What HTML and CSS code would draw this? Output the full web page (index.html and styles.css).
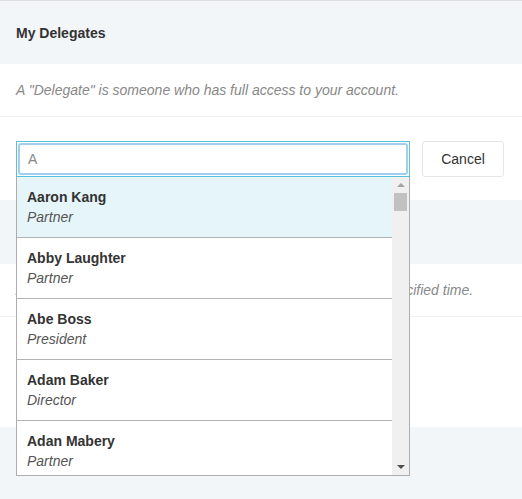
FILE: index.html
```html
<!DOCTYPE html>
<html lang="en">
<head>
<meta charset="UTF-8">
<title>My Delegates</title>
<link rel="stylesheet" href="styles.css">
</head>
<body>

<div class="panel-header">My Delegates</div>
<div class="panel-body">
  <p class="note">A "Delegate" is someone who has full access to your account.</p>
</div>

<div class="search-row">
  <div class="combo">
    <input class="combo-input" type="text" value="A">
    <div class="combo-menu">
      <ul class="combo-list">
        <li class="combo-item active">
          <div class="item-name">Aaron Kang</div>
          <div class="item-title">Partner</div>
        </li>
        <li class="combo-item">
          <div class="item-name">Abby Laughter</div>
          <div class="item-title">Partner</div>
        </li>
        <li class="combo-item">
          <div class="item-name">Abe Boss</div>
          <div class="item-title">President</div>
        </li>
        <li class="combo-item">
          <div class="item-name">Adam Baker</div>
          <div class="item-title">Director</div>
        </li>
        <li class="combo-item">
          <div class="item-name">Adan Mabery</div>
          <div class="item-title">Partner</div>
        </li>
      </ul>
      <div class="scrollbar">
        <span class="arrow-up"></span>
        <span class="thumb"></span>
        <span class="track"></span>
        <span class="arrow-down"></span>
      </div>
    </div>
  </div>
  <button class="btn">Cancel</button>
</div>

<div class="panel-header tall"></div>
<div class="panel-body">
  <p class="note">A "Temporary Delegate" has access to your account until a specified time.</p>
</div>
<div class="panel-empty"></div>
<div class="panel-footer"></div>

</body>
</html>
```

FILE: styles.css
```css
body {
  margin: 0;
  font-family: "Liberation Sans", Arial, sans-serif;
  font-size: 14px;
  color: #333;
  background: #fff;
  border-top: 1px solid #dedede;
  overflow: hidden;
}
.panel-header {
  height: 63px;
  padding: 0 16px;
  display: flex;
  align-items: center;
  background: #f3f6f9;
  font-size: 14px;
  font-weight: bold;
  color: #333;
}
.panel-header.tall {
  height: 64px;
}
.panel-body {
  height: 52px;
  padding: 0 16px;
  display: flex;
  align-items: center;
  border-bottom: 1px solid #eef1f4;
}
.note {
  margin: 0;
  font-style: italic;
  color: #888;
}
.search-row {
  display: flex;
  align-items: flex-start;
  gap: 12px;
  padding: 24px 16px 23px;
}
.combo {
  position: relative;
  width: 390px;
  height: 32px;
  padding: 1px;
  border: 1px solid #5bc0de;
  z-index: 10;
}
.combo-input {
  box-sizing: border-box;
  display: block;
  width: 100%;
  height: 32px;
  margin: 0;
  padding: 0 8px;
  border: 2px solid #a4cef0;
  border-radius: 3px;
  outline: none;
  font-family: inherit;
  font-size: 14px;
  color: #888;
}
.combo-menu {
  position: absolute;
  top: 100%;
  left: -1px;
  right: -1px;
  height: 298px;
  margin-top: 1px;
  display: flex;
  background: #fff;
  border: 1px solid #adadad;
  border-top: 0;
  overflow: hidden;
}
.combo-list {
  flex: 1;
  list-style: none;
  margin: 0;
  padding: 0;
}
.combo-item {
  height: 40px;
  padding: 10px 10px;
  border-bottom: 1px solid #b3b3b3;
  line-height: 20px;
}
.combo-item.active {
  background: #e6f5fa;
}
.item-name {
  font-weight: bold;
  color: #333;
}
.item-title {
  font-style: italic;
  color: #555;
}
.scrollbar {
  width: 17px;
  display: flex;
  flex-direction: column;
  align-items: center;
  background: #f0f0f0;
}
.arrow-up,
.arrow-down {
  width: 0;
  height: 0;
  border-left: 4px solid transparent;
  border-right: 4px solid transparent;
}
.arrow-up {
  margin-top: 6px;
  border-bottom: 4px solid #a3a3a3;
}
.arrow-down {
  margin-bottom: 6px;
  border-top: 4px solid #505050;
}
.thumb {
  width: 13px;
  height: 18px;
  margin-top: 6px;
  background: #c1c1c1;
}
.track {
  flex: 1;
}
.btn {
  height: 36px;
  width: 82px;
  background: #fff;
  border: 1px solid #e6e6e6;
  border-radius: 3px;
  font-family: inherit;
  font-size: 14px;
  color: #333;
}
.panel-empty {
  height: 110px;
}
.panel-footer {
  height: 80px;
  background: #f3f6f9;
}
```
